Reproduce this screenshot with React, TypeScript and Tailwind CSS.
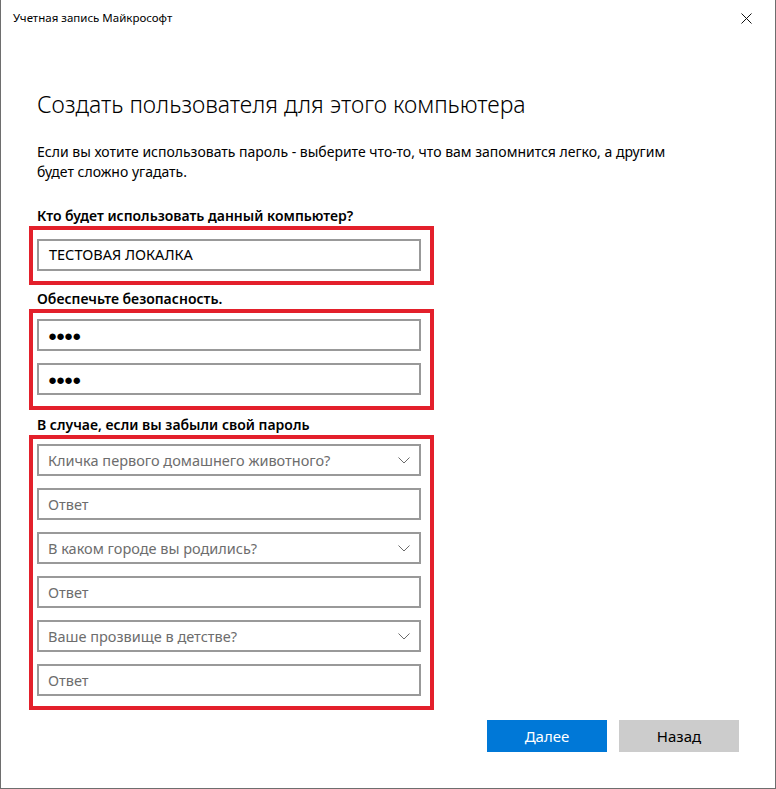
import React from 'react';

const font = { fontFamily: '"Noto Sans", "Open Sans", sans-serif' };

const Chevron = () => (
    <svg width="12" height="7" viewBox="0 0 12 7" className="shrink-0">
        <path d="M0.5 0.5 L6 6 L11.5 0.5" fill="none" stroke="#6b6b6b" strokeWidth="1" />
    </svg>
);

const Field = ({ children, select }: { children: React.ReactNode; select?: boolean }) => (
    <div className="h-[32px] w-[384px] border-2 border-[#999999] bg-white flex items-center pl-[9px] pr-[9px]">
        <div className="flex-1 truncate">{children}</div>
        {select && <Chevron />}
    </div>
);

const Placeholder = ({ text }: { text: string }) => (
    <span className="text-[14.5px] text-[#6d6d6d]">{text}</span>
);

const Dots = () => <span className="text-[15px] leading-none tracking-[-1px] text-black">●●●●</span>;

export default function App() {
    return (
        <div
            className="w-[776px] h-[789px] bg-white border-l border-r border-b border-[#6e6e6e] flex flex-col text-black overflow-hidden"
            style={font}
        >
            <div className="h-[36px] flex items-center justify-between pl-[12px] pr-[23px] shrink-0">
                <span className="text-[11.5px]">Учетная запись Майкрософт</span>
                <svg width="11" height="11" viewBox="0 0 11 11">
                    <path d="M0.5 0.5 L10.5 10.5 M10.5 0.5 L0.5 10.5" stroke="#111" strokeWidth="1" />
                </svg>
            </div>

            <div className="pl-[36px] flex flex-col">
                <h1 className="mt-[52px] text-[23px] leading-[32px] font-light">
                    Создать пользователя для этого компьютера
                </h1>
                <p className="mt-[22px] text-[14px] leading-[20px] w-[660px]">
                    Если вы хотите использовать пароль - выберите что-то, что вам запомнится легко, а другим будет сложно угадать.
                </p>

                <div className="mt-[24px] text-[14px] leading-[20px] font-semibold">
                    Кто будет использовать данный компьютер?
                </div>
                <div className="ml-[-8px] w-[405px] border-4 border-[#e3202b] pl-[4px] pt-[9px] pb-[10px]">
                    <div className="h-[32px] w-[384px] border-2 border-[#999999] flex items-center pl-[10px]">
                        <span className="text-[14.5px]">ТЕСТОВАЯ ЛОКАЛКА</span>
                    </div>
                </div>

                <div className="mt-[4px] text-[14px] leading-[20px] font-semibold">Обеспечьте безопасность.</div>
                <div className="ml-[-8px] w-[405px] border-4 border-[#e3202b] pl-[4px] pt-[6px] pb-[11px] flex flex-col gap-[12px]">
                    <Field><Dots /></Field>
                    <Field><Dots /></Field>
                </div>

                <div className="mt-[5px] text-[14px] leading-[20px] font-semibold">В случае, если вы забыли свой пароль</div>
                <div className="ml-[-8px] w-[405px] border-4 border-[#e3202b] pl-[4px] pt-[5px] pb-[10px] flex flex-col gap-[12px]">
                    <Field select><Placeholder text="Кличка первого домашнего животного?" /></Field>
                    <Field><Placeholder text="Ответ" /></Field>
                    <Field select><Placeholder text="В каком городе вы родились?" /></Field>
                    <Field><Placeholder text="Ответ" /></Field>
                    <Field select><Placeholder text="Ваше прозвище в детстве?" /></Field>
                    <Field><Placeholder text="Ответ" /></Field>
                </div>
            </div>

            <div className="mt-[10px] flex justify-end gap-[12px] pr-[36px]">
                <button className="w-[120px] h-[32px] bg-[#0078d7] text-white text-[15px]">Далее</button>
                <button className="w-[120px] h-[32px] bg-[#cccccc] text-black text-[15px]">Назад</button>
            </div>
        </div>
    );
}
